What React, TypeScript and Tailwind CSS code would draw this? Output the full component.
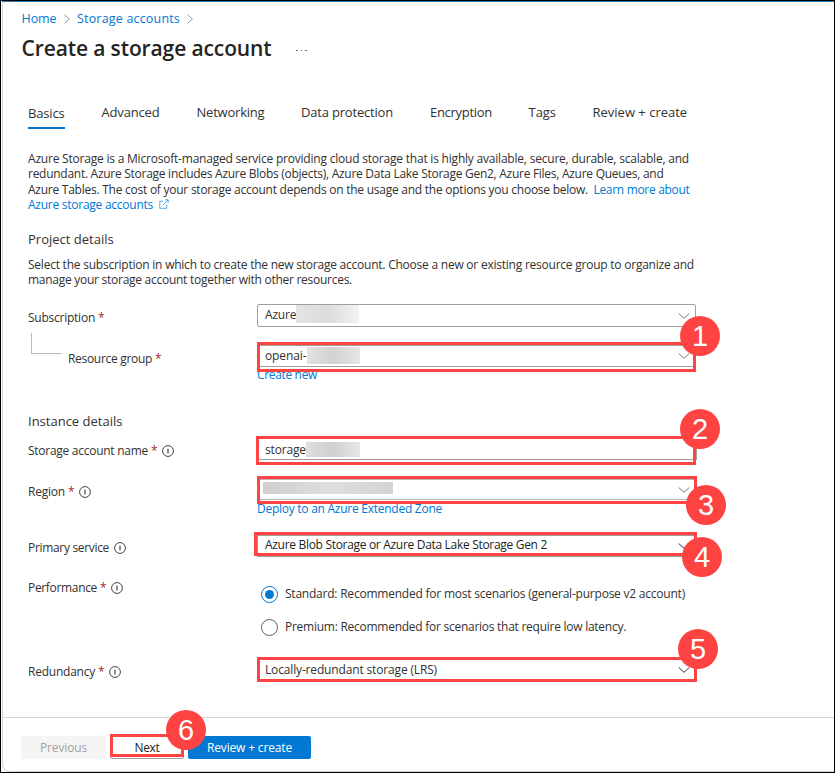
import type { ReactNode } from "react";

function Crumb() {
  return (
    <svg width="7" height="10" viewBox="0 0 7 10" fill="none" stroke="#8a8a8a" strokeWidth="0.9">
      <path d="M0.6 0.7 5.4 5 0.6 9.3" />
    </svg>
  );
}

function Chevron({ color = "#777" }: { color?: string }) {
  return (
    <svg className="shrink-0" width="12" height="8" viewBox="0 0 12 8" fill="none" stroke={color} strokeWidth="1">
      <path d="M0.7 1.5 6 6.3 11.3 1.5" />
    </svg>
  );
}

function Info() {
  return (
    <svg className="shrink-0" width="12" height="12" viewBox="0 0 12 12" fill="none" stroke="#444" strokeWidth="1">
      <circle cx="6" cy="6" r="5.4" />
      <path d="M6 3.8V8.4" strokeWidth="1.2" />
    </svg>
  );
}

function External() {
  return (
    <svg className="mb-[3px] ml-[6px] inline-block" width="10" height="10" viewBox="0 0 10 10" fill="none" stroke="#4a9fe0" strokeWidth="0.9">
      <path d="M4.4 2.2H0.8V9.3H7.8V5.4M4 6 9 1M6 0.8H9.2V4" />
    </svg>
  );
}

function Badge({ n, className }: { n: number; className: string }) {
  return (
    <div
      className={`absolute z-20 flex size-10 items-center justify-center rounded-full bg-[#ff4343] font-['Liberation_Sans',sans-serif] text-[29px] leading-none text-white ${className}`}
    >
      {n}
    </div>
  );
}

function Mark({ className }: { className: string }) {
  return <div className={`absolute z-10 border-3 border-[#ff4343] ${className}`} />;
}

function Label({ text, required, info, className }: { text: string; required?: boolean; info?: boolean; className: string }) {
  return (
    <div className={`flex h-4 items-center whitespace-nowrap ${className}`}>
      {text}
      {required && <span className="ml-[3px] text-[#a4262c]">*</span>}
      {info && (
        <span className="ml-[5px]">
          <Info />
        </span>
      )}
    </div>
  );
}

function Row({ h, label, children }: { h: string; label: ReactNode; children: ReactNode }) {
  return (
    <div className={`flex ${h}`}>
      <div className="w-[229px] shrink-0">{label}</div>
      <div className="relative w-[440px]">{children}</div>
    </div>
  );
}

const tabs = [
  { t: "Advanced", c: "w-[95px] tracking-[-0.17px]" },
  { t: "Networking", c: "w-[104.5px] tracking-[-0.21px]" },
  { t: "Data protection", c: "w-[129px] tracking-[-0.19px]" },
  { t: "Encryption", c: "w-[98.5px] tracking-[-0.29px]" },
  { t: "Tags", c: "w-[64px] tracking-[-0.03px]" },
  { t: "Review + create", c: "w-[100px]" },
];

export default function App() {
  return (
    <div className="relative flex h-[773px] w-[835px] flex-col overflow-hidden border border-black bg-white font-['Open_Sans','Noto_Sans',sans-serif] text-xs text-[#323130]">
      <div className="ml-px flex flex-1 flex-col rounded-bl-lg border-b border-l border-[#d2d2d2]">
        <div className="-ml-px h-px shrink-0 bg-[#2f7fbd]" />
        <header className="flex h-[96px] shrink-0 flex-col pl-[18.5px]">
          <nav className="mt-2 flex h-[18px] items-center text-[12.5px] whitespace-nowrap text-[#0078d4]">
            <span className="w-[42.5px] tracking-[-0.08px]">Home</span>
            <span className="w-[13px]">
              <Crumb />
            </span>
            <span className="w-[109.5px] tracking-[0.18px]">Storage accounts</span>
            <Crumb />
          </nav>
          <div className="mt-1 flex h-8 items-center">
            <h1 className="w-[274.5px] text-[21px] font-semibold tracking-[-0.116px] whitespace-nowrap text-[#252423]">Create a storage account</h1>
            <span className="flex gap-[3px] pt-1">
              <i className="h-px w-[1.5px] bg-[#666]" />
              <i className="h-px w-[1.5px] bg-[#666]" />
              <i className="h-px w-[1.5px] bg-[#666]" />
            </span>
          </div>
        </header>

        <main className="flex h-[619px] shrink-0 flex-col pl-[25px]">
          <div className="flex h-[31px] shrink-0 text-[13px] leading-[28px] whitespace-nowrap">
            <div className="mr-[36.5px] h-[31px] w-[37px] border-b-2 border-[#0078d4] pt-px tracking-[-0.17px]">Basics</div>
            {tabs.map(({ t, c }) => (
              <div key={t} className={c}>
                {t}
              </div>
            ))}
          </div>

          <p className="mt-[22px] h-[61px] leading-[15.25px] whitespace-nowrap">
            <span className="tracking-[-0.209px]">
              Azure Storage is a Microsoft-managed service providing cloud storage that is highly available, secure, durable, scalable, and
            </span>
            <br />
            <span className="tracking-[-0.274px]">
              redundant. Azure Storage includes Azure Blobs (objects), Azure Data Lake Storage Gen2, Azure Files, Azure Queues, and
            </span>
            <br />
            <span className="tracking-[-0.249px]">
              Azure Tables. The cost of your storage account depends on the usage and the options you choose below.
            </span>
            <a className="ml-[5.5px] tracking-[-0.313px] text-[#0078d4]">Learn more about</a>
            <br />
            <a className="tracking-[-0.254px] text-[#0078d4]">
              Azure storage accounts
              <External />
            </a>
          </p>

          <h2 className="mt-[17px] h-5 text-[13px] leading-5">Project details</h2>
          <p className="mt-2 leading-[15.25px] whitespace-nowrap">
            <span className="tracking-[-0.232px]">
              Select the subscription in which to create the new storage account. Choose a new or existing resource group to organize and
            </span>
            <br />
            <span className="tracking-[-0.267px]">manage your storage account together with other resources.</span>
          </p>

          <section className="mt-[12.5px]">
            <Row h="h-10" label={<Label text="Subscription" required className="mt-[10px] tracking-[-0.243px]" />}>
              <div className="mt-[4px] flex h-[23px] w-[439px] items-center rounded-xs border border-[#a19f9d] pr-[5px] pl-[7px]">
                <span className="-mt-0.5 tracking-[-0.2px]">Azure</span>
                <span className="-mt-1 h-[18px] w-[63px] bg-linear-to-r from-[#e4e4e4] via-[#dcdcdc] to-[#f2f2f2]" />
                <span className="ml-auto">
                  <Chevron />
                </span>
              </div>
            </Row>
            <Row
              h="h-[71px]"
              label={
                <div className="flex">
                  <div className="-mt-[7px] ml-[3px] h-[21px] w-[31px] border-b border-l border-[#bbb9b7]" />
                  <Label text="Resource group" required className="mt-[11px] ml-[6px] tracking-[-0.307px]" />
                </div>
              }
            >
              <Mark className="top-[2px] left-0 h-[30px] w-[439px]" />
              <Badge n={1} className="-top-6 left-[423px]" />
              <div className="mt-[5px] flex h-[22px] w-[439px] items-center border border-[#a19f9d] pr-[5px] pl-[7px]">
                <span className="tracking-[-0.1px]">openai-</span>
                <span className="-mt-0.5 h-[17px] w-[53px] bg-linear-to-r from-[#e2e2e2] via-[#d2d2d2] to-[#e6e6e6]" />
                <span className="ml-auto">
                  <Chevron />
                </span>
              </div>
              <a className="block leading-4 tracking-[-0.341px] text-[#0078d4]">Create new</a>
            </Row>

            <h2 className="h-[23px] text-[13px] leading-5">Instance details</h2>
            <Row h="h-10" label={<Label text="Storage account name" required info className="mt-[9px] tracking-[-0.27px]" />}>
              <Mark className="top-[2px] -left-px h-[29px] w-[440px]" />
              <Badge n={2} className="-top-[25px] left-[423px]" />
              <div className="mt-[5px] flex h-[21px] w-[440px] items-center border-r border-b border-[#a19f9d] pl-2">
                <span className="mt-0.5 tracking-[-0.17px]">storage</span>
                <span className="mt-px h-[15px] w-[54px] bg-linear-to-r from-[#dedede] via-[#d0d0d2] to-[#e6e6e6]" />
              </div>
            </Row>
            <Row h="h-14" label={<Label text="Region" required info className="mt-[10px] tracking-[-0.214px]" />}>
              <Mark className="top-[2px] left-0 h-[28px] w-[440px]" />
              <Badge n={3} className="top-[11px] left-[429px]" />
              <div className="mt-[5px] flex h-[21px] w-[439px] items-center border border-[#b5b3b1] pr-[5px] pl-[5px]">
                <span className="-mt-1 h-3 w-[130px] bg-linear-to-r from-[#cfcfcf] via-[#dedede] to-[#d4d4d4]" />
                <span className="ml-auto">
                  <Chevron />
                </span>
              </div>
              <a className="block leading-[17px] tracking-[-0.26px] text-[#0078d4]">Deploy to an Azure Extended Zone</a>
            </Row>
            <Row h="h-11" label={<Label text="Primary service" info className="mt-[10px] tracking-[-0.323px]" />}>
              <Mark className="top-[2px] -left-[3px] h-6 w-[443px]" />
              <Badge n={4} className="top-[7px] left-[425px]" />
              <div className="mt-[5px] flex h-[22px] w-[439px] items-center border border-[#a19f9d] pr-[5px] pl-[7px]">
                <span className="-mt-0.5 tracking-[-0.309px] text-[#201f1e]">Azure Blob Storage or Azure Data Lake Storage Gen 2</span>
                <span className="ml-auto">
                  <Chevron color="#333" />
                </span>
              </div>
            </Row>
            <Row h="h-20" label={<Label text="Performance" required info className="mt-[6px] tracking-[-0.332px]" />}>
              <div className="mt-[11px] ml-1 flex h-[18px] items-center gap-[7px] whitespace-nowrap">
                <span className="flex size-[17px] items-center justify-center rounded-full border border-[#0078d4]">
                  <span className="size-[9px] rounded-full bg-[#0078d4]" />
                </span>
                <span className="tracking-[-0.222px]">Standard: Recommended for most scenarios (general-purpose v2 account)</span>
              </div>
              <div className="mt-[15px] ml-1 flex h-[18px] items-center gap-[7px] whitespace-nowrap">
                <span className="size-[17px] rounded-full border border-[#605e5c]" />
                <span className="tracking-[-0.261px]">Premium: Recommended for scenarios that require low latency.</span>
              </div>
            </Row>
            <Row h="h-[60px]" label={<Label text="Redundancy" required info className="mt-[10px] tracking-[-0.234px]" />}>
              <Mark className="top-[3px] left-0 h-[25px] w-[440px]" />
              <Badge n={5} className="-top-[25px] left-[421px]" />
              <div className="mt-[5px] flex h-[21px] w-[439px] items-center pr-[6px] pl-2">
                <span className="tracking-[-0.155px]">Locally-redundant storage (LRS)</span>
                <span className="ml-auto">
                  <Chevron color="#333" />
                </span>
              </div>
            </Row>
          </section>
        </main>

        <footer className="relative flex flex-1 border-t border-[#d6d6d6] pt-[18px] pl-[18px]">
          <button className="h-[23px] w-[85px] rounded-xs bg-[#f5f5f5] tracking-[-0.15px] text-[#a19f9d]">Previous</button>
          <button className="ml-1 h-[23px] w-[74px] rounded-xs border border-[#a19f9d] tracking-[-0.336px] text-[#201f1e]">Next</button>
          <button className="ml-1 h-[23px] w-[123px] rounded-xs bg-[#0078d4] tracking-[-0.158px] text-white">Review + create</button>
          <Mark className="top-[16px] left-[107px] h-[23px] w-[74px]" />
          <Badge n={6} className="-top-[8px] left-[163px]" />
        </footer>
      </div>
    </div>
  );
}
